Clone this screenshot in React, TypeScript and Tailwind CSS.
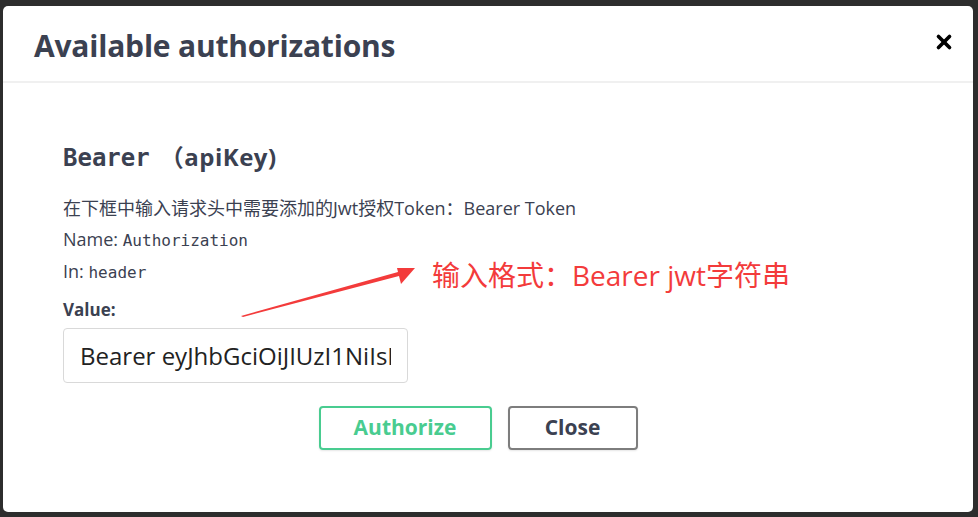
import { X } from "lucide-react";

const sans = "font-['Open_Sans','Noto_Sans_CJK_SC',sans-serif]";
const mono = "font-['DejaVu_Sans_Mono','Liberation_Mono',monospace]";

const Annotation = () => (
  <div className="pointer-events-none absolute inset-0">
    <svg className="absolute left-0 top-0" width="978" height="517" viewBox="0 0 978 517">
      {/* tapered shaft + head */}
      <polygon points="241,316 398,272 397,268 415,268 401,284 399,276 243,317" fill="#f33b3b" />
    </svg>
    <div className={`absolute left-[432px] top-[256px] text-[28px] leading-[38px] text-[#f33b3b] ${sans}`}>
      输入格式：Bearer jwt字符串
    </div>
  </div>
);

export default function App() {
  return (
    <div className={`relative h-[517px] w-full bg-[#2d2d2d] pt-[6px] pr-[5px] pb-[5px] pl-[3px] ${sans}`}>
      <div className="flex h-full flex-col rounded-[5px] bg-white">
        {/* Header */}
        <div className="flex h-[77px] items-center justify-between border-b-2 border-[#f0f0f0] pl-[31px] pr-[18px]">
          <h3 className="mt-[4px] text-[30px] font-bold tracking-[-0.2px] text-[#3b4151]">Available authorizations</h3>
          <X className="mt-[-4px] h-[22px] w-[22px] text-black" strokeWidth={4} />
        </div>

        {/* Body */}
        <div className="flex flex-col pl-[60px] pt-[58px]">
          <h4 className="flex items-baseline text-[24px] font-bold leading-[32px] text-[#3b4151]">
            <code className={`${mono} text-[24px]`}>Bearer</code>
            <span className="ml-[10px] tracking-[0.5px]">（apiKey)</span>
          </h4>
          <div className="mt-[22px] flex flex-col gap-[6px] text-[18px] leading-[25px] text-[#3b4151]">
            <p>在下框中输入请求头中需要添加的Jwt授权Token：Bearer Token</p>
            <p>
              Name: <code className={`${mono} text-[16px]`}>Authorization</code>
            </p>
            <p>
              In: <code className={`${mono} text-[16px]`}>header</code>
            </p>
          </div>
          <label className="mt-[13px] text-[17px] font-bold leading-[24px] text-[#3b4151]">Value:</label>
          <input
            readOnly
            value="Bearer eyJhbGciOiJIUzI1NiIsInR5cCI6IkpXVCJ9"
            className={`mt-[6px] h-[55px] w-[345px] rounded-[4px] border border-[#d9d9d9] px-[16px] text-[24px] text-[#222] outline-none ${sans}`}
          />
        </div>

        {/* Buttons */}
        <div className="mt-[23px] flex justify-center gap-[16px] pr-[20px]">
          <button className="h-[44px] w-[173px] rounded-[4px] border-2 border-[#49cc90] text-[21px] font-bold text-[#49cc90] shadow-[0_1px_2px_rgba(0,0,0,0.1)]">
            Authorize
          </button>
          <button className="h-[44px] w-[130px] rounded-[4px] border-2 border-[#7d7d7d] text-[21px] font-bold text-[#3b4151] shadow-[0_1px_2px_rgba(0,0,0,0.1)]">
            Close
          </button>
        </div>
      </div>
      <Annotation />
    </div>
  );
}
